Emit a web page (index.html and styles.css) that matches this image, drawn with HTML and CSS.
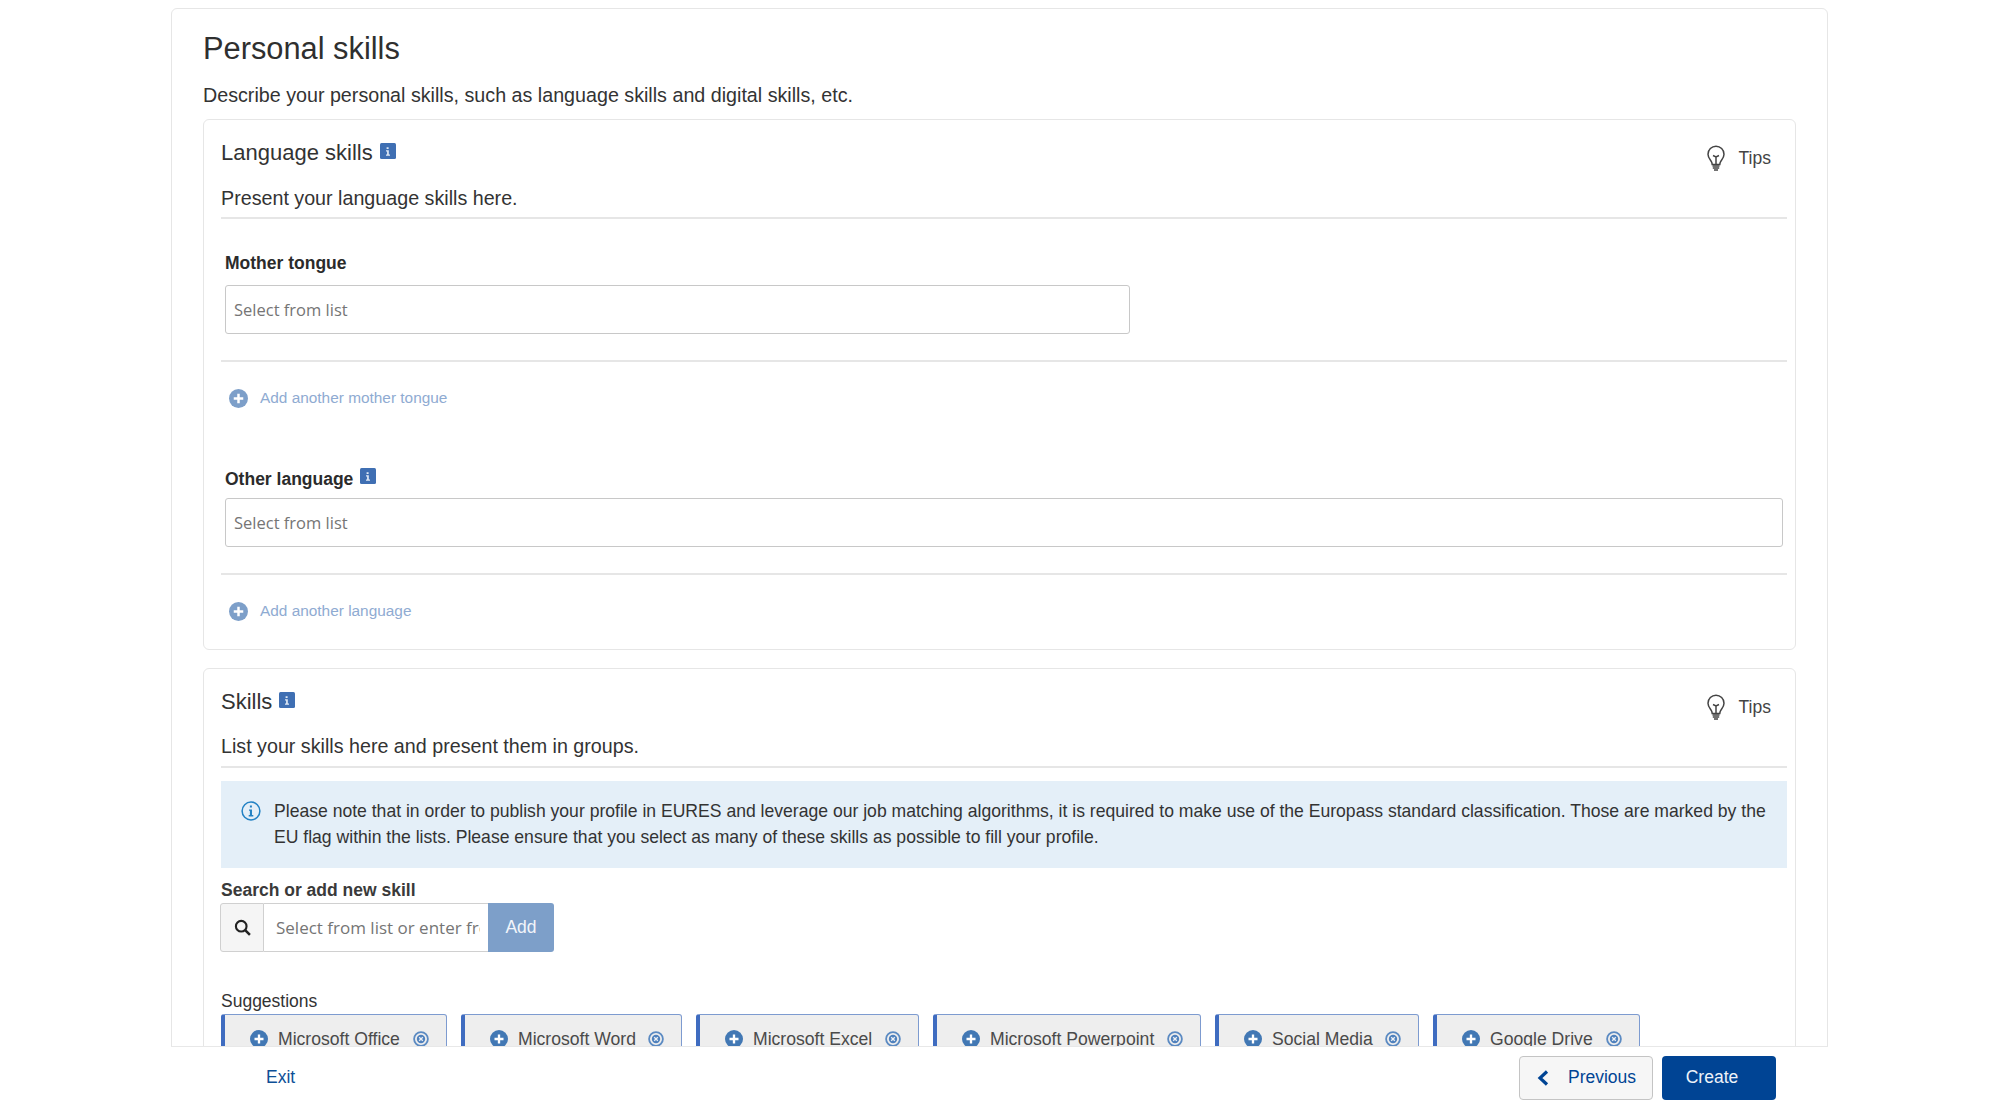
FILE: index.html
```html
<!DOCTYPE html>
<html lang="en">
<head>
<meta charset="utf-8">
<title>Personal skills</title>
<link rel="stylesheet" href="styles.css">
</head>
<body>
<svg class="defs" width="0" height="0" aria-hidden="true">
  <symbol id="badge" viewBox="0 0 16 16"><rect width="16" height="16" rx="1.5" fill="#3f6fb3"/><path d="M6.6 4.2h2v1.7h-2zM6 7.2h2.8v4.3h1.2v1.2H6v-1.2h1.1V8.4H6z" fill="#dfe9f5"/></symbol>
  <symbol id="bulb" viewBox="0 0 18 26"><path d="M9 1.2a8 8 0 0 0-8 8c0 3.2 1.7 5 3 6.8.9 1.2 1.1 2.2 1.2 3.4h7.600c.1-1.200.3-2.200 1.200-3.400 1.300-1.800 3-3.600 3-6.800a8 8 0 0 0-8-8z" fill="none" stroke="#444" stroke-width="1.500"/><path d="M6 10.500 9 12l3-1.500M9 12v7" fill="none" stroke="#444" stroke-width="1.500"/><path d="M5.500 21h7M5.800 23h6.400M7 25h4" stroke="#444" stroke-width="1.400"/></symbol>
  <symbol id="plus" viewBox="0 0 20 20"><circle cx="10" cy="10" r="10" fill="currentColor"/><path d="M10 5v10M5 10h10" stroke="#fff" stroke-width="2.600"/></symbol>
  <symbol id="xcircle" viewBox="0 0 16 16"><circle cx="8" cy="8" r="6.900" fill="none" stroke="#5b8ac2" stroke-width="1.800"/><circle cx="8" cy="8" r="4.200" fill="#4f81bd"/><path d="M6.200 6.200l3.600 3.600M9.800 6.200l-3.600 3.600" stroke="#eef1f5" stroke-width="1.300"/></symbol>
</svg>

<main class="scroller">
  <section class="outer">
    <h1 class="page-title">Personal skills</h1>
    <p class="lead">Describe your personal skills, such as language skills and digital skills, etc.</p>

    <div class="card card-lang">
      <header class="card-head">
        <div class="head-row">
          <h2 class="card-title">Language skills <svg class="badge"><use href="#badge"/></svg></h2>
          <a class="tips"><svg class="bulb"><use href="#bulb"/></svg>Tips</a>
        </div>
        <p class="card-desc">Present your language skills here.</p>
      </header>

      <div class="field field-mother">
        <label class="label">Mother tongue</label>
        <input class="input input-half" placeholder="Select from list">
      </div>
      <hr class="rule rule-after-input">
      <a class="add-link"><svg class="plus-lg"><use href="#plus"/></svg>Add another mother tongue</a>

      <div class="field field-other">
        <label class="label">Other language <svg class="badge badge-sm"><use href="#badge"/></svg></label>
        <input class="input" placeholder="Select from list">
      </div>
      <hr class="rule rule-after-input">
      <a class="add-link"><svg class="plus-lg"><use href="#plus"/></svg>Add another language</a>
    </div>

    <div class="card card-skills">
      <header class="card-head">
        <div class="head-row">
          <h2 class="card-title">Skills <svg class="badge"><use href="#badge"/></svg></h2>
          <a class="tips"><svg class="bulb"><use href="#bulb"/></svg>Tips</a>
        </div>
        <p class="card-desc">List your skills here and present them in groups.</p>
      </header>

      <div class="notice">
        <svg class="notice-icon" viewBox="0 0 20 20"><circle cx="10" cy="10" r="8.900" fill="none" stroke="#2382c4" stroke-width="1.500"/><path d="M8.900 4.600h2v2h-2zM8 8.500h3v5.600h1.300v1.300H7.700v-1.300h1.200V9.800H8z" fill="#2382c4"/></svg>
        <p class="notice-text">Please note that in order to publish your profile in EURES and leverage our job matching algorithms, it is required to make use of the Europass standard classification. Those are marked by the EU flag within the lists. Please ensure that you select as many of these skills as possible to fill your profile.</p>
      </div>

      <label class="label label-search">Search or add new skill</label>
      <div class="search-group">
        <span class="search-addon"><svg class="search-icon" viewBox="0 0 16 16"><circle cx="6.800" cy="6.800" r="5" fill="none" stroke="#222" stroke-width="2"/><path d="M10.500 10.500 15 15" stroke="#222" stroke-width="2.400"/></svg></span>
        <input class="search-input" placeholder="Select from list or enter free text">
        <button class="add-btn">Add</button>
      </div>

      <div class="sugg-label">Suggestions</div>
      <div class="chips">
        <span class="chip chip-1"><svg class="plus-sm"><use href="#plus"/></svg><span class="chip-text">Microsoft Office</span><svg class="x-sm"><use href="#xcircle"/></svg></span>
        <span class="chip chip-2"><svg class="plus-sm"><use href="#plus"/></svg><span class="chip-text">Microsoft Word</span><svg class="x-sm"><use href="#xcircle"/></svg></span>
        <span class="chip chip-3"><svg class="plus-sm"><use href="#plus"/></svg><span class="chip-text">Microsoft Excel</span><svg class="x-sm"><use href="#xcircle"/></svg></span>
        <span class="chip chip-4"><svg class="plus-sm"><use href="#plus"/></svg><span class="chip-text">Microsoft Powerpoint</span><svg class="x-sm"><use href="#xcircle"/></svg></span>
        <span class="chip chip-5"><svg class="plus-sm"><use href="#plus"/></svg><span class="chip-text">Social Media</span><svg class="x-sm"><use href="#xcircle"/></svg></span>
        <span class="chip chip-6"><svg class="plus-sm"><use href="#plus"/></svg><span class="chip-text">Google Drive</span><svg class="x-sm"><use href="#xcircle"/></svg></span>
      </div>
    </div>
  </section>
</main>

<footer class="footer">
  <a class="exit">Exit</a>
  <div class="footer-actions">
    <button class="btn-prev"><svg class="chev" viewBox="0 0 12 16"><path d="M10 1.500 3 8l7 6.500" fill="none" stroke="#004494" stroke-width="3.200"/></svg>Previous</button>
    <button class="btn-create">Create</button>
  </div>
</footer>
</body>
</html>
```
FILE: styles.css
```css
* { box-sizing: border-box; }
html, body { height: 100%; }
body {
  margin: 0;
  display: flex;
  flex-direction: column;
  overflow: hidden;
  background: #fff;
  color: #333;
  font-family: "Liberation Sans", Arial, sans-serif;
  font-size: 17.5px;
}
.defs { position: absolute; }
.scroller { flex: 1; min-height: 0; overflow: hidden; padding: 8px 171px 0; }
.outer {
  border: 1px solid #e6e6e6;
  border-radius: 6px;
  padding: 0 31px 40px;
  height: 1200px;
}
.page-title { margin: 22px 0 0; font-size: 30.8px; line-height: 36px; font-weight: 400; color: #2f2f2f; }
.lead { margin: 15px 0 0; font-size: 19.7px; line-height: 26px; color: #333; }
.card {
  border: 1px solid #e6e6e6;
  border-radius: 6px;
  padding: 0 8px 0 17px;
}
.card-lang { margin-top: 11px; height: 531px; }
.card-skills { margin-top: 18px; }
.card-head { border-bottom: 2px solid #e6e6e6; }
.head-row { display: flex; justify-content: space-between; align-items: flex-start; padding-right: 16px; }
.card-title { margin: 20px 0 0; font-size: 22px; line-height: 26px; font-weight: 400; color: #333; }
.badge { width: 16px; height: 16px; margin-left: 1px; vertical-align: 1px; }
.badge-sm { margin-left: 2px; vertical-align: 1px; }
.tips { display: flex; align-items: center; gap: 14px; margin-top: 25px; font-size: 17.5px; line-height: 26px; color: #444; }
.bulb { width: 18px; height: 26px; }
.card-desc { margin: 14px 0 0; padding-bottom: 6px; font-size: 19.7px; line-height: 26px; color: #333; }
.card-skills .card-desc { margin-top: 13px; padding-bottom: 7px; }
.field { padding-left: 4px; padding-right: 4px; }
.field-mother { margin-top: 33px; }
.field-other { margin-top: 59px; }
.label { display: block; font-size: 17.5px; line-height: 22px; font-weight: 700; color: #2b2b2b; }
.input {
  display: block;
  width: 100%;
  height: 49px;
  margin-top: 11px;
  padding: 0 8px;
  border: 1px solid #c8c8c8;
  border-radius: 3px;
  outline: 0;
  font-family: "Open Sans", sans-serif;
  font-size: 16.500px;
  background: #fff;
}
.field-other .input { margin-top: 8px; }
.input-half { width: 905px; }
.input::placeholder, .search-input::placeholder { color: #757575; opacity: 1; }
.rule { border: 0; border-top: 2px solid #e6e6e6; margin: 0; }
.rule-after-input { margin-top: 26px; }
.add-link { display: flex; align-items: center; gap: 12px; margin: 25px 0 0 8px; font-size: 15.4px; line-height: 22px; color: #8fabd2; }
.plus-lg { width: 19px; height: 19px; color: #7d9fc9; }
.notice {
  display: flex;
  gap: 13px;
  margin-top: 13px;
  padding: 17px 20px 18px;
  background: #e4eff8;
}
.notice-icon { width: 20px; height: 20px; flex: none; margin-top: 3px; }
.notice-text { margin: 0; font-size: 17.58px; line-height: 26px; color: #333; }
.label-search { margin-top: 11px; color: #3a3a3a; }
.search-group {
  display: flex;
  width: 334px;
  height: 49px;
  margin: 2px 0 0 -1px;
}
.search-addon {
  width: 44px;
  display: flex;
  align-items: center;
  justify-content: center;
  background: #f5f5f5;
  border: 1px solid #d0d0d0;
  border-radius: 3px 0 0 3px;
}
.search-icon { width: 17px; height: 17px; }
.search-input {
  flex: 1;
  min-width: 0;
  padding: 0 8px 0 12px;
  border: 1px solid #d0d0d0;
  border-width: 1px 0;
  outline: 0;
  font-family: "Open Sans", sans-serif;
  font-size: 17px;
}
.add-btn {
  width: 66px;
  border: 0;
  border-radius: 0 3px 3px 0;
  background: #7d9fc9;
  color: #f2f5fa;
  font-family: inherit;
  font-size: 17.5px;
}
.sugg-label { margin-top: 38px; font-size: 17.5px; line-height: 22px; color: #333; }
.chips { display: flex; gap: 14px; margin-top: 2px; }
.chip {
  display: flex;
  align-items: center;
  height: 50px;
  padding: 0 17px 0 25px;
  background: #eee;
  border: 1px solid #7d9bd0;
  border-left: 4px solid #3f6cc0;
  border-radius: 3px;
  font-size: 17.6px;
  color: #4a4a4a;
}
.plus-sm { width: 18px; height: 18px; flex: none; color: #4278b4; }
.chip-text { margin: 0 auto 0 10px; white-space: nowrap; }
.x-sm { width: 16px; height: 16px; flex: none; margin-left: 8px; }
.chip-1 { width: 226px; }
.chip-2 { width: 221px; }
.chip-3 { width: 223px; }
.chip-4 { width: 268px; }
.chip-5 { width: 204px; }
.chip-6 { width: 207px; }
.footer {
  flex: none;
  height: 64px;
  display: flex;
  align-items: center;
  justify-content: space-between;
  margin: 0 171px;
  padding: 0 52px 2px 95px;
  background: #fff;
  border-top: 1px solid #e8e8e8;
  position: relative;
}
.exit { font-size: 17.5px; color: #0e4f96; }
.footer-actions { display: flex; gap: 9px; }
.btn-prev {
  display: flex;
  align-items: center;
  gap: 19px;
  width: 134px;
  height: 44px;
  padding: 0 0 0 17px;
  background: #f6f6f6;
  border: 1px solid #c4c4c4;
  border-radius: 4px;
  color: #004494;
  font-family: inherit;
  font-size: 17.5px;
}
.chev { width: 12px; height: 16px; }
.btn-create {
  width: 114px;
  height: 44px;
  padding: 0 14px 0 0;
  background: #004494;
  border: 0;
  border-radius: 4px;
  color: #eef3f9;
  font-family: inherit;
  font-size: 17.5px;
}
```
